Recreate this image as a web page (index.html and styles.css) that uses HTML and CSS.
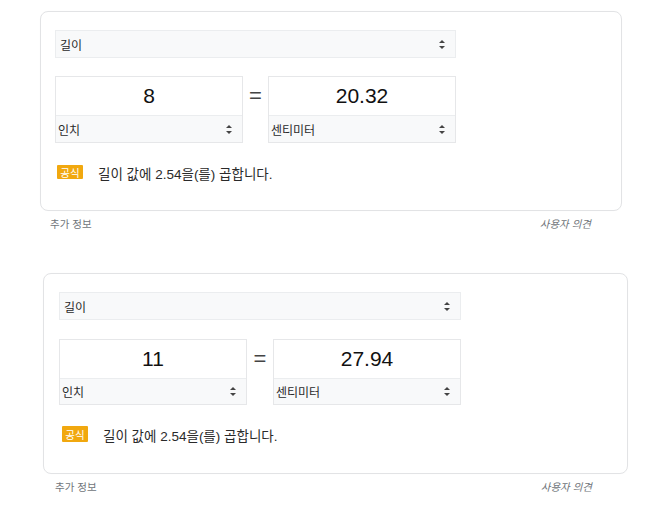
FILE: index.html
```html
<!DOCTYPE html>
<html lang="ko">
<head>
<meta charset="utf-8">
<link rel="stylesheet" href="styles.css">
</head>
<body>
<div class="block b1">
  <div class="card">
    <div class="sel main-sel"><span>길이</span><span class="arr"></span></div>
    <div class="row">
      <div class="box">
        <div class="val">8</div>
        <div class="sel unit"><span>인치</span><span class="arr"></span></div>
      </div>
      <div class="eq">=</div>
      <div class="box">
        <div class="val">20.32</div>
        <div class="sel unit"><span>센티미터</span><span class="arr"></span></div>
      </div>
    </div>
    <div class="formula"><span class="badge">공식</span><span class="ftext">길이 값에 2.54을(를) 곱합니다.</span></div>
  </div>
  <div class="foot"><span>추가 정보</span><span class="fb">사용자 의견</span></div>
</div>
<div class="block b2">
  <div class="card">
    <div class="sel main-sel"><span>길이</span><span class="arr"></span></div>
    <div class="row">
      <div class="box">
        <div class="val">11</div>
        <div class="sel unit"><span>인치</span><span class="arr"></span></div>
      </div>
      <div class="eq">=</div>
      <div class="box">
        <div class="val">27.94</div>
        <div class="sel unit"><span>센티미터</span><span class="arr"></span></div>
      </div>
    </div>
    <div class="formula"><span class="badge">공식</span><span class="ftext">길이 값에 2.54을(를) 곱합니다.</span></div>
  </div>
  <div class="foot"><span>추가 정보</span><span class="fb">사용자 의견</span></div>
</div>
</body>
</html>
```
FILE: styles.css
```css
* { box-sizing: border-box; }
body {
  margin: 0;
  background: #fff;
  font-family: "Liberation Sans", Arial, "Noto Sans CJK KR", sans-serif;
  color: #222;
}
.block { width: 582px; }
.b1 { margin: 11px 0 0 40px; }
.b2 { margin: 42px 0 0 43px; width: 585px; }
.card {
  border: 1px solid #e2e3e5;
  border-radius: 8px;
  height: 200px;
  padding: 18px 0 0 14px;
  box-shadow: 0 0 1px rgba(0,0,0,0.04);
}
.b2 .card { height: 201px; padding: 18px 0 0 15px; }
.sel {
  display: flex;
  align-items: center;
  justify-content: space-between;
  background: #f8f9fa;
  font-size: 12px;
  color: #2a2a2a;
}
.main-sel {
  width: 401px;
  height: 28px;
  border: 1px solid #ebedef;
  padding: 0 10px 0 4px;
}
.b2 .main-sel { width: 402px; }
.arr {
  width: 6px;
  height: 9px;
  position: relative;
}
.arr::before, .arr::after {
  content: "";
  position: absolute;
  left: 0;
  border-left: 3px solid transparent;
  border-right: 3px solid transparent;
}
.arr::before { top: 0; border-bottom: 3.5px solid #444; }
.arr::after { bottom: 0; border-top: 3.5px solid #444; }
.row {
  display: flex;
  align-items: flex-start;
  margin-top: 18px;
}
.b2 .row { margin-top: 19px; }
.box {
  width: 188px;
  height: 67px;
  border: 1px solid #e6e7e9;
  display: flex;
  flex-direction: column;
}
.b2 .box { height: 66px; }
.val {
  height: 38px;
  display: flex;
  align-items: center;
  justify-content: center;
  font-size: 21px;
  color: #111;
  background: #fff;
}
.unit {
  flex: 1;
  border-top: 1px solid #ebedef;
  padding: 0 10px 0 2px;
}
.eq {
  width: 25px;
  text-align: center;
  font-size: 22px;
  line-height: 20px;
  margin-top: 10px;
  color: #444;
}
.b2 .eq { width: 26px; }
.formula {
  display: flex;
  align-items: center;
  margin-top: 18px;
  padding-left: 2px;
}
.b2 .formula { margin-top: 18px; padding-left: 3px; }
.badge {
  background: #f1a80f;
  color: #fff;
  font-size: 10.5px;
  height: 14px;
  width: 26px;
  display: flex;
  align-items: center;
  justify-content: center;
  border-radius: 1px;
}
.b2 .badge { height: 16px; }
.ftext {
  margin-left: 15px;
  font-size: 13.5px;
  color: #2a2a2a;
  margin-top: 2px;
}
.foot {
  display: flex;
  justify-content: space-between;
  font-size: 10.5px;
  color: #70757a;
  padding: 5px 31px 0 10px;
}
.b2 .foot { padding: 5px 36px 0 12px; }
.fb { font-style: italic; }
```
